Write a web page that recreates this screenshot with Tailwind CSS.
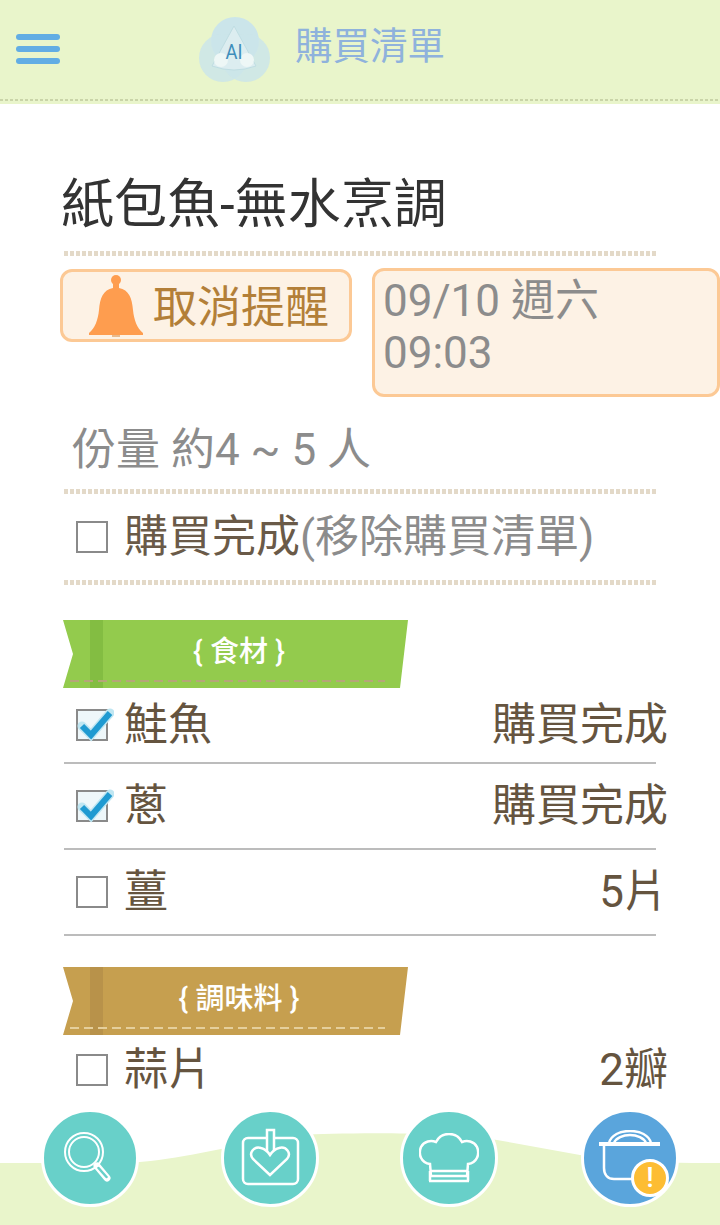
<!DOCTYPE html>
<html lang="zh-Hant">
<head>
    <meta charset="UTF-8">
    <meta name="viewport" content="width=device-width, initial-scale=1.0">
    <title>購買清單</title>
    <script src="https://cdn.jsdelivr.net/npm/@tailwindcss/browser@4"></script>
</head>
<body class="relative w-[720px] h-[1225px] overflow-hidden bg-white font-['Roboto','Noto_Sans_CJK_TC',sans-serif]">

    <!-- header -->
    <header class="relative h-[104px] bg-[#e9f5cb] flex items-center">
        <div class="ml-4 w-11 flex flex-col gap-1.5 -mt-1.5">
            <span class="h-1.5 rounded-full bg-[#62ade4]"></span>
            <span class="h-1.5 rounded-full bg-[#62ade4]"></span>
            <span class="h-1.5 rounded-full bg-[#62ade4]"></span>
        </div>
        <svg class="ml-[138px] -mt-[4px]" width="72" height="68" viewBox="0 0 72 68">
            <circle cx="37" cy="25" r="24" fill="#cbe5ea"/>
            <circle cx="25" cy="42" r="24" fill="#cbe5ea" opacity=".85"/>
            <circle cx="48" cy="42" r="24" fill="#cbe5ea" opacity=".85"/>
            <path d="M36 10 L58 50 Q36 58 14 50 Z" fill="#dcedf0" stroke="#bfdde2"/>
            <circle cx="23" cy="44" r="7" fill="#eef7f6"/>
            <circle cx="49" cy="44" r="7" fill="#eef7f6"/>
            <text x="36" y="43" text-anchor="middle" font-family="Roboto" font-size="21" fill="#3f8dbb" textLength="17" lengthAdjust="spacingAndGlyphs">AI</text>
        </svg>
        <h1 class="ml-[25px] -mt-[10px] text-[37.5px] leading-none text-[#8fb2dc]">購買清單</h1>
        <div class="absolute left-0 right-0 top-[99px] h-[2px] bg-[repeating-linear-gradient(90deg,#c9d4a8_0,#c9d4a8_3px,transparent_3px,transparent_5px)]"></div>
    </header>

    <main>
        <h2 class="ml-[61px] mt-[70px] text-[53px] leading-[62px] text-[#333333]">紙包魚-無水烹調</h2>
        <div class="ml-16 mt-[15px] w-[592px] h-[5px] bg-[repeating-linear-gradient(90deg,#e3d9c8_0,#e3d9c8_4px,transparent_4px,transparent_6px)]"></div>

        <!-- reminder -->
        <div class="flex items-start ml-[60px] mt-[12px]">
            <button class="mt-px w-[292px] h-[73px] flex items-center border-[3px] border-[#fcc995] bg-[#fdf2e5] rounded-xl text-[44px] leading-none text-[#b37f38]">
                <svg class="ml-[25px]" width="56" height="64" viewBox="0 0 56 64">
                    <circle cx="28" cy="6" r="5" fill="#fe9d4f"/>
                    <path d="M25 9h6v5c10 2 13 10 14 22 1 10 4 18 10 23v2H1v-2c6-5 9-13 10-23 1-12 4-20 14-22z" fill="#fe9d4f"/>
                    <rect x="24" y="61" width="8" height="2" fill="#e8b98c"/>
                </svg>
                <span class="ml-[9px] mt-1">取消提醒</span>
            </button>
            <div class="ml-5 w-[348px] h-[129px] border-[3px] border-[#fcc995] bg-[#fdf2e5] rounded-xl pl-2 pt-1 text-[44px] leading-[52px] text-[#8c8c8c]">09/10 週六<br>09:03</div>
        </div>

        <p class="ml-[72px] mt-[22px] text-[44px] leading-[62px] text-[#8c8c8c]">份量 約4 ~ 5 人</p>
        <div class="ml-16 mt-[8px] w-[592px] h-[5px] bg-[repeating-linear-gradient(90deg,#e3d9c8_0,#e3d9c8_4px,transparent_4px,transparent_6px)]"></div>

        <div class="flex items-center ml-[76px] h-[86px]">
            <span class="w-8 h-8 border-2 border-[#8a8a8a]"></span>
            <span class="ml-4 text-[44px] leading-none text-[#6a5a48]">購買完成<span class="text-[#8c8c8c]">(移除購買清單)</span></span>
        </div>
        <div class="ml-16 -mt-[0px] w-[592px] h-[5px] bg-[repeating-linear-gradient(90deg,#e3d9c8_0,#e3d9c8_4px,transparent_4px,transparent_6px)]"></div>

        <!-- ingredients -->
        <div class="relative ml-[63px] mt-[35px] w-[345px] h-[68px] flex items-center justify-center">
            <svg class="absolute inset-0" width="345" height="68" viewBox="0 0 345 68">
                <path d="M0 0H345L337 68H0L10 34Z" fill="#93cb4d"/>
                <rect x="27" y="0" width="13" height="68" fill="#83bd42"/>
                <line x1="7" y1="61" x2="322" y2="61" stroke="#b5a678" stroke-width="2" stroke-dasharray="9 5"/>
            </svg>
            <span class="relative -mt-1 ml-[7px] text-[29px] leading-none font-medium text-white">{ 食材 }</span>
        </div>

        <div class="w-[592px] ml-16 h-[76px] flex items-center border-b-2 border-[#bcbcbc]">
            <span class="relative ml-3 w-8 h-8 border-2 border-[#8a8a8a] bg-[#eef7fa]">
                <svg class="absolute -left-[2px] -top-[5px]" width="38" height="36" viewBox="0 0 38 36">
                    <path d="M6 20 L15 29 L34 7" fill="none" stroke="#bfe6f2" stroke-width="9" stroke-linecap="round"/>
                    <path d="M6 20 L15 29 L34 7" fill="none" stroke="#1f9ad1" stroke-width="6"/>
                </svg>
            </span>
            <span class="ml-4 text-[44px] leading-none text-[#65543f]">鮭魚</span>
            <span class="ml-auto -mr-3 text-[44px] leading-none text-[#65543f]">購買完成</span>
        </div>
        <div class="w-[592px] ml-16 h-[86px] flex items-center border-b-2 border-[#bcbcbc]">
            <span class="relative ml-3 w-8 h-8 border-2 border-[#8a8a8a] bg-[#eef7fa]">
                <svg class="absolute -left-[2px] -top-[5px]" width="38" height="36" viewBox="0 0 38 36">
                    <path d="M6 20 L15 29 L34 7" fill="none" stroke="#bfe6f2" stroke-width="9" stroke-linecap="round"/>
                    <path d="M6 20 L15 29 L34 7" fill="none" stroke="#1f9ad1" stroke-width="6"/>
                </svg>
            </span>
            <span class="ml-4 text-[44px] leading-none text-[#65543f]">蔥</span>
            <span class="ml-auto -mr-3 text-[44px] leading-none text-[#65543f]">購買完成</span>
        </div>
        <div class="w-[592px] ml-16 h-[86px] flex items-center border-b-2 border-[#bcbcbc]">
            <span class="ml-3 w-8 h-8 border-2 border-[#8a8a8a]"></span>
            <span class="ml-4 text-[44px] leading-none text-[#65543f]">薑</span>
            <span class="ml-auto -mr-3 text-[44px] leading-none text-[#65543f]">5片</span>
        </div>

        <!-- seasoning -->
        <div class="relative ml-[63px] mt-[31px] w-[345px] h-[68px] flex items-center justify-center">
            <svg class="absolute inset-0" width="345" height="68" viewBox="0 0 345 68">
                <path d="M0 0H345L337 68H0L10 34Z" fill="#c69f4f"/>
                <rect x="27" y="0" width="13" height="68" fill="#b8924a"/>
                <line x1="7" y1="61" x2="322" y2="61" stroke="#e5cf9c" stroke-width="2" stroke-dasharray="9 5"/>
            </svg>
            <span class="relative -mt-1 ml-[7px] text-[29px] leading-none font-medium text-white">{ 調味料 }</span>
        </div>
        <div class="w-[592px] ml-16 h-[70px] flex items-center">
            <span class="ml-3 w-8 h-8 border-2 border-[#8a8a8a]"></span>
            <span class="ml-4 text-[44px] leading-none text-[#65543f]">蒜片</span>
            <span class="ml-auto -mr-3 text-[44px] leading-none text-[#65543f]">2瓣</span>
        </div>
    </main>

    <!-- bottom nav over the list -->
    <nav class="absolute left-0 bottom-0 w-[720px] h-[120px]">
        <svg class="absolute inset-0" width="720" height="120" viewBox="0 0 720 120">
            <path d="M0 58H120C170 58 240 38 300 30C340 28 440 26 497 35L580 50C610 56 640 58 720 58V120H0Z" fill="#e9f5cb"/>
        </svg>
        <div class="relative flex pl-[41px] pt-[4px]">
            <a class="w-[98px] h-[98px] rounded-full border-[3px] border-white bg-[#68d0c9] flex items-center justify-center">
                <svg width="60" height="60" viewBox="0 0 60 60" fill="none" stroke="#fff">
                    <circle cx="24" cy="24" r="19" stroke-width="2"/>
                    <circle cx="24" cy="24" r="15" stroke-width="2"/>
                    <path d="M37 38l10 12" stroke-width="7" stroke-linecap="round"/>
                    <path d="M38.500 40l8 9" stroke="#68d0c9" stroke-width="2.500" stroke-linecap="round"/>
                </svg>
            </a>
            <a class="ml-[82px] w-[98px] h-[98px] rounded-full border-[3px] border-white bg-[#68d0c9] flex items-center justify-center">
                <svg width="60" height="60" viewBox="0 0 60 60" fill="none" stroke="#fff" stroke-width="2.500">
                    <rect x="3" y="10" width="55" height="46" rx="5"/>
                    <path d="M27 25V2h7v23" fill="#68d0c9"/>
                    <path d="M30 47L13 31c-5-6 1-13 8-11 4 1 7 4 9 7 2-3 5-6 9-7 7-2 13 5 8 11Z" fill="#68d0c9"/>
                </svg>
            </a>
            <a class="ml-[81px] w-[98px] h-[98px] rounded-full border-[3px] border-white bg-[#68d0c9] flex items-center justify-center">
                <svg width="60" height="50" viewBox="0 0 60 50" fill="none" stroke="#fff" stroke-width="2.500">
                    <path d="M11 31C2 30-1 21 2 14c3-6 10-7 15-5 3-6 8-8 13-8s10 2 13 8c5-2 12-1 15 5 3 7 0 16-9 17l-1 12H12Z"/>
                    <path d="M11 38H49M10 48H50" />
                    <path d="M11 38v10M49 38v10"/>
                </svg>
            </a>
            <a class="relative ml-[83px] w-[98px] h-[98px] rounded-full border-[3px] border-white bg-[#5aa5dc] flex items-center justify-center">
                <svg class="-mt-1" width="64" height="52" viewBox="0 0 64 52" fill="none" stroke="#fff" stroke-width="2.500">
                    <path d="M1 14H62" stroke-width="4"/>
                    <path d="M6 14V38c0 7 4 11 10 11H36"/>
                    <path d="M11 13C13 5 22 1 32 1S51 5 53 13"/>
                    <path d="M16 13C18 8 25 5 32 5S46 8 48 13"/>
                </svg>
                <span class="absolute left-[47px] top-[47px] w-[38px] h-[38px] rounded-full border-[3px] border-white bg-[#fdbd33] flex items-center justify-center text-[28px] leading-none font-medium text-white">!</span>
            </a>
        </div>
    </nav>
</body>
</html>
